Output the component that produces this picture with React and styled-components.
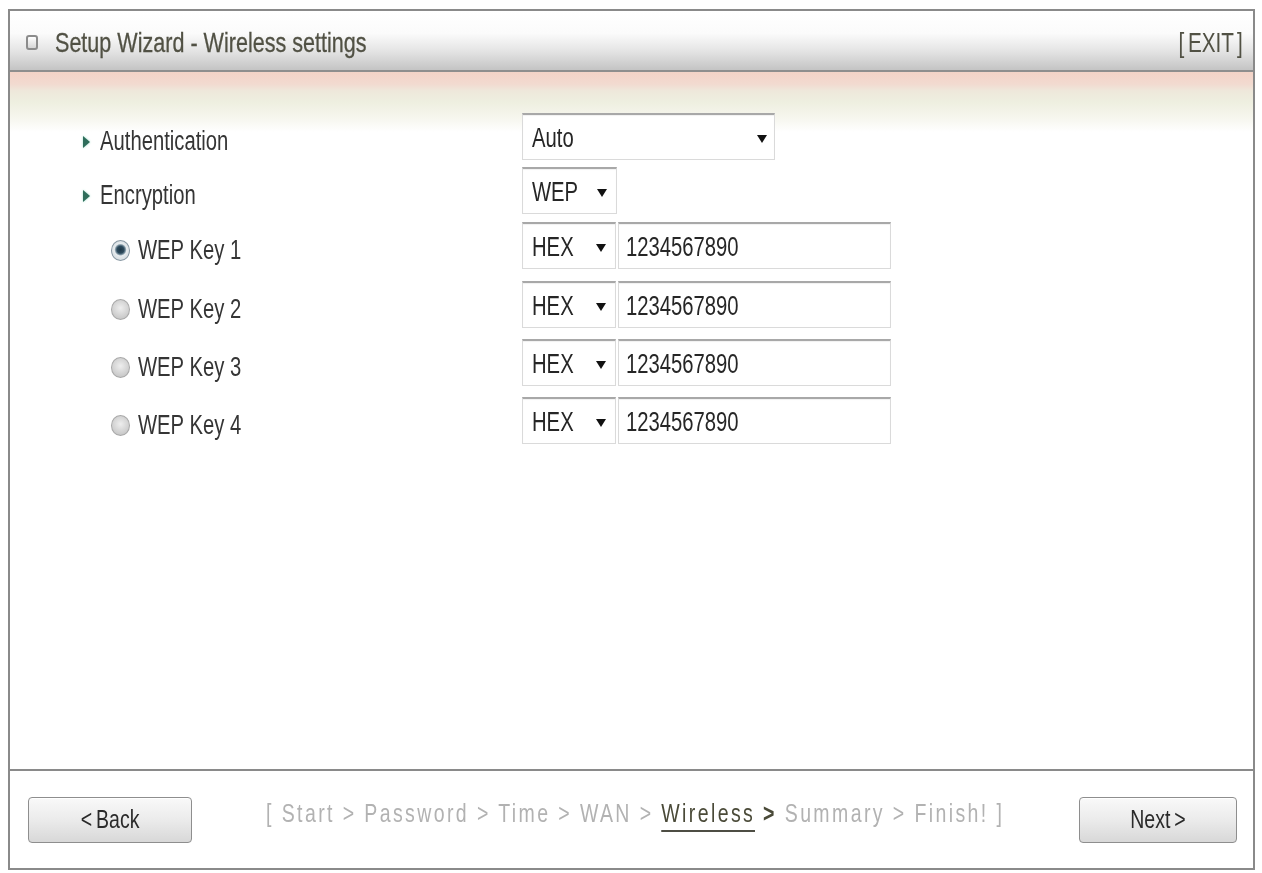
import React from 'react';
import styled, { createGlobalStyle } from 'styled-components';

const GlobalStyle = createGlobalStyle`
  body {
    margin: 0;
    background: #ffffff;
    font-family: "Liberation Sans", Arial, sans-serif;
  }
`;

// narrow lettering: the whole UI uses a condensed face
const Narrow = styled.span`
  display: inline-block;
  white-space: nowrap;
  transform: scaleX(${p => p.$sx || 0.75});
  transform-origin: ${p => p.$origin || 'left'} center;
`;

const Frame = styled.div`
  box-sizing: border-box;
  margin: 9px 0 0 8px;
  width: 1247px;
  height: 861px;
  border: 2px solid #8a8a8a;
  display: flex;
  flex-direction: column;
`;

const Header = styled.header`
  box-sizing: border-box;
  height: 61px;
  padding: 4px 10px 0 16px;
  display: flex;
  align-items: center;
  justify-content: space-between;
  background: linear-gradient(to bottom, #ffffff 0%, #fbfbfb 38%, #e4e4e4 68%, #c4c4c4 100%);
  border-bottom: 2px solid #8e8e8e;
`;

const TitleGroup = styled.div`
  display: flex;
  align-items: center;
  gap: 17px;
`;

const TitleIcon = styled.span`
  box-sizing: border-box;
  width: 12px;
  height: 15px;
  border: 2px solid #8c8c8c;
  border-radius: 3px;
  background: linear-gradient(to bottom, #ffffff, #d6d6d6);
`;

const Title = styled.h1`
  margin: 0;
  font-size: 28px;
  font-weight: normal;
  color: #515144;
  -webkit-text-stroke: 0.3px #515144;
`;

const Exit = styled.a`
  font-size: 28px;
  color: #515144;
  word-spacing: -3px;
  text-decoration: none;
  cursor: pointer;
`;

const Body = styled.main`
  flex: 1;
  padding: 41px 0 0 73px;
  background: linear-gradient(
    to bottom,
    #f3d3c7 0px,
    #f2dad0 12px,
    #eee8db 19px,
    #eeefe0 30px,
    #f6f6ee 46px,
    #ffffff 60px
  ) no-repeat;
`;

const Row = styled.div`
  display: grid;
  grid-template-columns: 439px auto;
  height: 47px;
  margin-top: ${p => p.$gap || 0}px;
  align-items: center;
`;

const Label = styled.div`
  display: flex;
  align-items: center;
  padding: 10px 0 0 ${p => (p.$indent ? 28 : 0)}px;
  font-size: 27px;
  color: #353535;
  height: 100%;
  box-sizing: border-box;
`;

const Arrow = styled.span`
  width: 0;
  height: 0;
  border-top: 6px solid transparent;
  border-bottom: 6px solid transparent;
  border-left: 7px solid #2f6d5b;
  filter: drop-shadow(0 0 1px #9fe0cc);
  margin-right: 10px;
`;

const Radio = styled.span`
  box-sizing: border-box;
  width: 19px;
  height: 21px;
  border-radius: 50%;
  margin-right: 8px;
  border: 1px solid ${p => (p.$checked ? '#8797a2' : '#a8a8a8')};
  background: ${p =>
    p.$checked
      ? 'radial-gradient(circle at 50% 46%, #1d3647 0, #2c4a5c 26%, #6f8796 36%, #e6ebee 46%, #c9d1d6 100%)'
      : 'radial-gradient(circle at 50% 42%, #eeeeee 0, #dadada 40%, #bdbdbd 100%)'};
`;

const Controls = styled.div`
  display: flex;
  height: 100%;
  gap: 2px;
`;

const Box = styled.div`
  box-sizing: border-box;
  width: ${p => p.$w}px;
  height: 100%;
  display: flex;
  align-items: center;
  padding: 3px ${p => p.$pr || 9}px 0 ${p => p.$pl || 9}px;
  background: #ffffff;
  border: 1px solid #dadada;
  border-top: 2px solid #a8a8a8;
  box-shadow: inset 0 1px 1px rgba(0, 0, 0, 0.06);
  font-size: 27px;
  color: #262626;
`;

const Caret = styled.span`
  margin-left: auto;
  width: 0;
  height: 0;
  border-left: 5px solid transparent;
  border-right: 5px solid transparent;
  border-top: 8px solid #111111;
`;

const Footer = styled.footer`
  box-sizing: border-box;
  height: 99px;
  border-top: 2px solid #8a8a8a;
  padding: 0 16px 0 18px;
  display: flex;
  align-items: center;
  justify-content: space-between;
`;

const Button = styled.button`
  box-sizing: border-box;
  width: ${p => p.$w}px;
  height: 46px;
  padding: 0;
  border: 1px solid #8e8e8e;
  border-radius: 4px;
  background: linear-gradient(to bottom, #f9f9f9 0%, #ebebeb 50%, #d8d8d8 100%);
  box-shadow: inset 0 1px 0 #ffffff;
  font-family: "Liberation Sans", Arial, sans-serif;
  font-size: 26px;
  color: #2a2a2a;
  word-spacing: -2px;
  display: flex;
  align-items: center;
  justify-content: center;
  cursor: pointer;
`;

const Steps = styled.nav`
  flex: none;
  width: 739px;
  margin-bottom: 12px;
  font-size: 26px;
  letter-spacing: 3.2px;
  color: #b2b2b2;
`;

const Step = styled.span`
  color: ${p => (p.$current ? '#4a4a38' : 'inherit')};
  border-bottom: ${p => (p.$current ? '2px solid #4e4e44' : 'none')};
  padding-bottom: 2px;
`;

const Sep = styled.span`
  color: ${p => (p.$dark ? '#4a4a38' : 'inherit')};
  font-weight: ${p => (p.$dark ? 'bold' : 'normal')};
`;

const keys = [
  { id: 1, checked: true, gap: 8 },
  { id: 2, gap: 12 },
  { id: 3, gap: 11 },
  { id: 4, gap: 11 },
];

const steps = ['Start', 'Password', 'Time', 'WAN', 'Wireless', 'Summary', 'Finish!'];
const current = 'Wireless';

export default function App() {
  return (
    <>
      <GlobalStyle />
      <Frame>
        <Header>
          <TitleGroup>
            <TitleIcon />
            <Title>
              <Narrow $sx={0.77}>Setup Wizard - Wireless settings</Narrow>
            </Title>
          </TitleGroup>
          <Exit>
            <Narrow $sx={0.74} $origin="right">[ EXIT ]</Narrow>
          </Exit>
        </Header>

        <Body>
          <Row>
            <Label>
              <Arrow />
              <Narrow>Authentication</Narrow>
            </Label>
            <Controls>
              <Box $w={253} $pr={7}>
                <Narrow>Auto</Narrow>
                <Caret />
              </Box>
            </Controls>
          </Row>
          <Row $gap={7}>
            <Label>
              <Arrow />
              <Narrow>Encryption</Narrow>
            </Label>
            <Controls>
              <Box $w={95}>
                <Narrow>WEP</Narrow>
                <Caret />
              </Box>
            </Controls>
          </Row>

          {keys.map(k => (
            <Row key={k.id} $gap={k.gap}>
              <Label $indent>
                <Radio $checked={k.checked} />
                <Narrow>WEP Key {k.id}</Narrow>
              </Label>
              <Controls>
                <Box $w={94}>
                  <Narrow>HEX</Narrow>
                  <Caret />
                </Box>
                <Box $w={273} $pl={7}>
                  <Narrow>1234567890</Narrow>
                </Box>
              </Controls>
            </Row>
          ))}
        </Body>

        <Footer>
          <Button $w={164}>
            <Narrow $origin="center">&lt; Back</Narrow>
          </Button>
          <Steps>
            <Narrow>
              [{' '}
              {steps.map((s, i) => (
                <React.Fragment key={s}>
                  <Step $current={s === current}>{s}</Step>
                  {i < steps.length - 1 && (
                    <>
                      {' '}
                      <Sep $dark={s === current}>&gt;</Sep>{' '}
                    </>
                  )}
                </React.Fragment>
              ))}{' '}
              ]
            </Narrow>
          </Steps>
          <Button $w={158}>
            <Narrow $origin="center">Next &gt;</Narrow>
          </Button>
        </Footer>
      </Frame>
    </>
  );
}
